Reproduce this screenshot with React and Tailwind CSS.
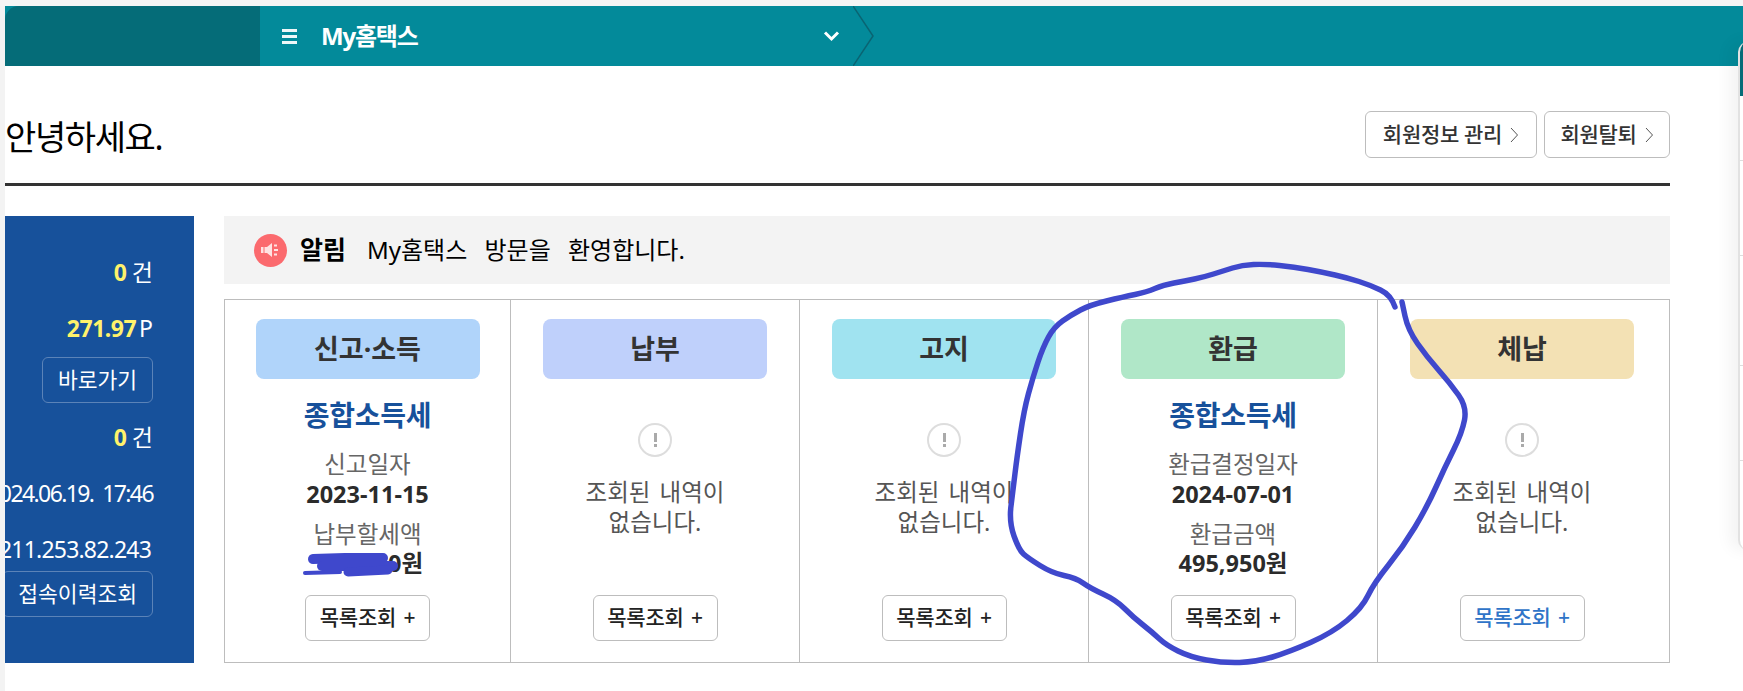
import React from "react";

const font = "font-['Noto_Sans','Noto_Sans_CJK_KR',sans-serif]";

// pen circle round the refund column, traced from the picture
const penPoints = [
  [1395, 307], [1391, 295], [1370, 285], [1348, 278], [1322, 272], [1294, 267], [1265, 264], [1242, 265],
  [1223, 271], [1204, 277], [1185, 281], [1163, 285], [1147, 292], [1123, 297], [1090, 305], [1071, 315],
  [1054, 327], [1043, 347], [1033, 377], [1024, 410], [1017, 457], [1013, 490], [1009, 522], [1019, 550],
  [1028, 558], [1052, 573], [1076, 578], [1090, 588], [1116, 600], [1133, 617], [1152, 632], [1166, 645],
  [1190, 657], [1223, 663], [1256, 662], [1289, 652], [1332, 633], [1362, 608], [1374, 583], [1403, 547],
  [1427, 507], [1445, 467], [1462, 433], [1467, 407], [1450, 383], [1427, 357], [1408, 330], [1402, 302],
];

const smoothPath = (pts) => {
  let d = `M${pts[0][0]} ${pts[0][1]}`;
  for (let i = 1; i < pts.length - 1; i++) {
    const mx = (pts[i][0] + pts[i + 1][0]) / 2;
    const my = (pts[i][1] + pts[i + 1][1]) / 2;
    d += `Q${pts[i][0]} ${pts[i][1]} ${mx} ${my}`;
  }
  const last = pts[pts.length - 1];
  return `${d}L${last[0]} ${last[1]}`;
};

const Chevron = () => (
  <svg className="inline-block ml-[8px]" width="9" height="16" viewBox="0 0 9 16" fill="none">
    <path d="M1 1l6.5 7L1 15" stroke="#555555" strokeWidth="1" />
  </svg>
);

const ListButton = ({ blue }) => (
  <button
    className={`mt-auto mb-[21px] w-[125px] h-[46px] border border-[#bdbdbd] rounded-[6px] bg-white text-[21px] font-medium tracking-[-0.2px] [word-spacing:2px] ${
      blue ? "text-[#2f74c8]" : "text-[#222222]"
    }`}
  >
    목록조회 +
  </button>
);

const Empty = () => (
  <>
    <div className="mt-[44px] w-[34px] h-[34px] rounded-full border-2 border-[#dddddd] flex items-center justify-center">
      <div className="flex flex-col items-center gap-[2px]">
        <div className="w-[3px] h-[9px] bg-[#aaaaaa]" />
        <div className="w-[3px] h-[3px] bg-[#aaaaaa]" />
      </div>
    </div>
    <div className="mt-[20px] text-center text-[23.5px] leading-[30px] text-[#555555] [word-spacing:3px]">
      <p>조회된 내역이</p>
      <p>없습니다.</p>
    </div>
  </>
);

const Detail = ({ label1, value1, label2, value2 }) => (
  <>
    <h3 className="mt-[17px] h-[38px] leading-[38px] text-[28px] font-bold text-[#17519b] tracking-[-0.3px]">
      종합소득세
    </h3>
    <div className="mt-[15px] text-center text-[23.5px] leading-[30px] text-[#666666]">{label1}</div>
    <div className="text-center text-[23.5px] leading-[30px] font-bold text-[#2b2b2b]">{value1}</div>
    <div className="mt-[10px] text-center text-[23.5px] leading-[30px] text-[#666666]">{label2}</div>
    <div className="text-center text-[23.5px] leading-[28px] font-bold text-[#2b2b2b]">{value2}</div>
  </>
);

const Cell = ({ title, color, last, children }) => (
  <div className={`flex flex-col items-center pt-[19px] ${last ? "pr-[3px]" : "border-r border-[#bdbdbd]"}`}>
    <div
      className={`w-[224px] h-[60px] shrink-0 rounded-[8px] flex items-center justify-center text-[27px] font-bold text-[#333333] ${color}`}
    >
      {title}
    </div>
    {children}
  </div>
);

const SideButton = ({ className, children }) => (
  <div className={`flex justify-end ${className}`}>
    <button className="shrink-0 h-[46px] px-[15px] whitespace-nowrap border border-[#5b83b8] rounded-[6px] text-[21.5px] text-white">
      {children}
    </button>
  </div>
);

const SideRow = ({ className, children }) => (
  <div className={`flex justify-end items-center h-[28px] whitespace-nowrap text-[23px] text-white ${className}`}>
    {children}
  </div>
);

export default function App() {
  return (
    <div className={`relative w-[1743px] h-[691px] overflow-hidden bg-white ${font}`}>
      <div className="h-[6px] bg-[#f5f5f5]" />
      <div className="flex">
        <div className="w-[5px] h-[685px] bg-[#f3f3f3] shrink-0" />
        <div className="flex-1">
          {/* top menu bar */}
          <div className="flex h-[60px] bg-[#038a9a] text-white">
            <div className="w-[255px] bg-[#056c78] rounded-tl-[14px]" />
            <div className="w-[593px] flex items-center pl-[22px] pr-[9px]">
              <div className="flex flex-col gap-[3px] w-[15px]">
                <div className="h-[3px] bg-[#eef7f8]" />
                <div className="h-[3px] bg-[#eef7f8]" />
                <div className="h-[3px] bg-[#eef7f8]" />
              </div>
              <span className="ml-[24px] text-[24px] font-bold tracking-[-1.2px]">My홈택스</span>
              <svg className="ml-auto mr-[4px]" width="17" height="12" viewBox="0 0 17 12" fill="none">
                <path d="M2 2.5l6.5 6.5L15 2.5" stroke="#fff" strokeWidth="3" />
              </svg>
            </div>
            <svg width="24" height="60" viewBox="0 0 24 60" fill="none">
              <path d="M0 0l20 30L0 60" stroke="#0a6472" strokeWidth="1.5" />
            </svg>
          </div>

          <div className="w-[1665px]">
            {/* heading */}
            <div className="h-[120px] flex items-start justify-between border-b-[3px] border-[#333333]">
              <h1 className="mt-[48px] text-[34px] leading-[46px] text-black tracking-[-1.4px]">안녕하세요.</h1>
              <div className="mt-[45px] flex gap-[7px] text-[#333333] text-[21px] font-medium tracking-[-0.3px]">
                <button className="w-[172px] h-[47px] border border-[#bdbdbd] rounded-[6px] flex items-center justify-center">
                  회원정보 관리<Chevron />
                </button>
                <button className="w-[126px] h-[47px] border border-[#bdbdbd] rounded-[6px] flex items-center justify-center">
                  회원탈퇴<Chevron />
                </button>
              </div>
            </div>

            <div className="mt-[30px] flex gap-[30px]">
              {/* left summary */}
              <div className="w-[189px] h-[447px] shrink-0 overflow-hidden bg-[#17519b] pr-[41px] pt-[42px]">
                <SideRow>
                  <b className="text-[#fff26b] mr-[5px]">0</b>건
                </SideRow>
                <SideRow className="mt-[28px]">
                  <b className="text-[#fff26b] mr-[3px] tracking-[-0.5px]">271.97</b>P
                </SideRow>
                <SideButton className="mt-[15px]">바로가기</SideButton>
                <SideRow className="mt-[20px]">
                  <b className="text-[#fff26b] mr-[5px]">0</b>건
                </SideRow>
                <SideRow className="mt-[28px] tracking-[-1.6px]">2024.06.19.&nbsp;&nbsp;17:46</SideRow>
                <SideRow className="mt-[28px] tracking-[-0.8px] pr-[2px]">211.253.82.243</SideRow>
                <SideButton className="mt-[8px]">접속이력조회</SideButton>
              </div>

              <div className="flex-1">
                {/* notice */}
                <div className="h-[68px] bg-[#f3f3f3] flex items-center pl-[30px] text-black text-[24px]">
                  <div className="w-[33px] h-[33px] rounded-full bg-[#fb6a6e] flex items-center justify-center">
                    <svg width="20" height="16" viewBox="0 0 20 16" fill="#ffe3e3">
                      <path d="M0 5h2.5v6H0zM3.5 5H6l5-4v14l-5-4H3.5z" />
                      <path d="M13 2.5h3v2h-3zM13 7h4v2h-4zM13 11.5h3v2h-3z" />
                    </svg>
                  </div>
                  <b className="ml-[13px] text-[25px]">알림</b>
                  <span className="ml-[21px] [word-spacing:11px]">My홈택스 방문을 환영합니다.</span>
                </div>

                {/* status table */}
                <div className="mt-[15px] h-[364px] border border-[#bdbdbd] grid grid-cols-[286px_289px_289px_289px_1fr]">
                  <Cell title="신고·소득" color="bg-[#b0d4fa]">
                    <Detail
                      label1="신고일자"
                      value1="2023-11-15"
                      label2="납부할세액"
                      value2={<span className="pl-[76px]">0원</span>}
                    />
                    <ListButton />
                  </Cell>
                  <Cell title="납부" color="bg-[#bfd0fb]">
                    <Empty />
                    <ListButton />
                  </Cell>
                  <Cell title="고지" color="bg-[#a0e3f0]">
                    <Empty />
                    <ListButton />
                  </Cell>
                  <Cell title="환급" color="bg-[#b0e7c8]">
                    <Detail
                      label1="환급결정일자"
                      value1="2024-07-01"
                      label2="환급금액"
                      value2="495,950원"
                    />
                    <ListButton />
                  </Cell>
                  <Cell title="체납" color="bg-[#f3e1b4]" last>
                    <Empty />
                    <ListButton blue />
                  </Cell>
                </div>
              </div>
            </div>
          </div>
        </div>
      </div>

      {/* floating side panel cut off at the right edge */}
      <div className="absolute left-[1738px] top-[42px] w-[40px] h-[508px] rounded-l-[10px] overflow-hidden bg-white border-l-2 border-[#e2e2e2] shadow-[-8px_0_16px_rgba(0,0,0,0.05)]">
        <div className="h-[54px] bg-[#056c78]" />
        <div className="h-[65px] border-b border-[#dddddd]" />
        <div className="h-[95px] border-b border-[#dddddd]" />
        <div className="h-[110px] border-b border-[#dddddd]" />
        <div className="h-[95px] border-b border-[#dddddd]" />
      </div>

      {/* hand drawn pen marks */}
      <svg className="absolute inset-0 pointer-events-none" width="1743" height="691" fill="none" stroke="#3f48cc" strokeLinecap="round" strokeLinejoin="round">
        <path strokeWidth="5.5" d={smoothPath(penPoints)} />
        <path strokeWidth="4" d="M305 573L340 572" />
        <path strokeWidth="10" d="M313 559L345 558L383 558" />
        <path strokeWidth="10" d="M322 566L393 566" />
        <path strokeWidth="9" d="M348 572L388 570" />
      </svg>
    </div>
  );
}
